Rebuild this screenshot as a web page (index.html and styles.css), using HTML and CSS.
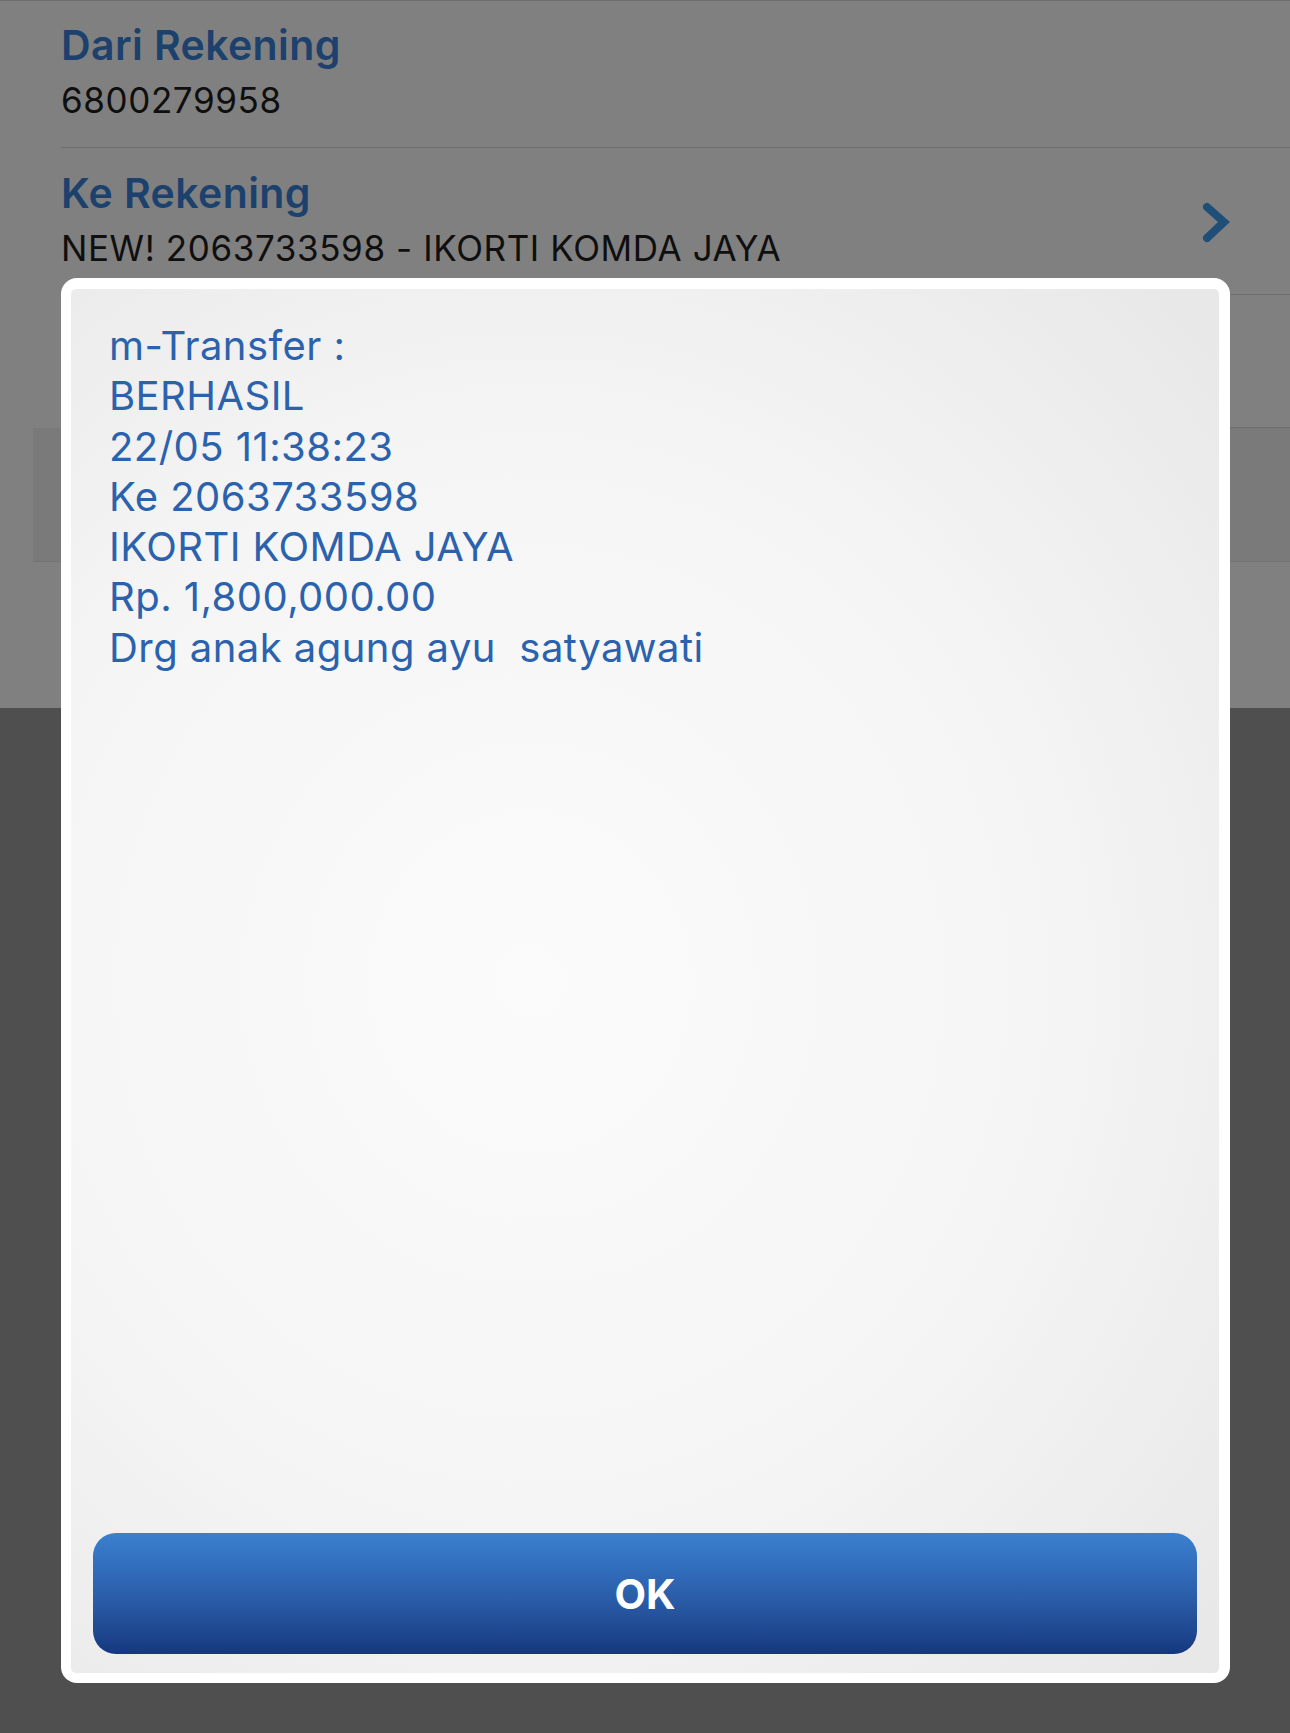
FILE: index.html
```html
<!DOCTYPE html>
<html lang="id">
<head>
<meta charset="utf-8">
<title>m-Transfer</title>
<link rel="stylesheet" href="styles.css">
</head>
<body>
<div class="page">
  <div class="row row-first">
    <div class="label">Dari Rekening</div>
    <div class="value">6800279958</div>
  </div>
  <div class="row row-link">
    <div class="row-text">
      <div class="label">Ke Rekening</div>
      <div class="value">NEW! 2063733598 - IKORTI KOMDA JAYA</div>
    </div>
    <svg class="chevron" width="30" height="42" viewBox="0 0 30 42">
      <path d="M7 5 L24 20 L7 36" fill="none" stroke="#1f4f78" stroke-width="8" stroke-linecap="round" stroke-linejoin="miter"/>
    </svg>
  </div>
  <div class="row row-empty"></div>
  <div class="row-field"></div>
  <div class="row-spacer"></div>
  <div class="page-bottom"></div>
</div>

<div class="overlay">
  <div class="modal">
    <div class="panel">
      <div class="message">
        <div>m-Transfer :</div>
        <div>BERHASIL</div>
        <div>22/05 11:38:23</div>
        <div>Ke 2063733598</div>
        <div>IKORTI KOMDA JAYA</div>
        <div>Rp. 1,800,000.00</div>
        <div>Drg anak agung ayu &nbsp;satyawati</div>
      </div>
      <button class="ok-btn">OK</button>
    </div>
  </div>
</div>
</body>
</html>
```

FILE: styles.css
```css
html, body {
  margin: 0;
  padding: 0;
}
body {
  width: 1290px;
  height: 1733px;
  position: relative;
  overflow: hidden;
  background: #4f4f4f;
  font-family: "Inter", "Liberation Sans", sans-serif;
}
.page {
  display: flex;
  flex-direction: column;
  height: 1733px;
  background: #808080;
  border-top: 1px solid #6d6d6d;
  box-sizing: border-box;
}
.row {
  margin-left: 61px;
  height: 147px;
  box-sizing: border-box;
  border-bottom: 1px solid #6e6e6e;
  padding-top: 19px;
}
.label {
  font-size: 41px;
  line-height: 50px;
  font-weight: 600;
  color: #1c416d;
  letter-spacing: 0.4px;
}
.value {
  font-size: 35px;
  line-height: 44px;
  margin-top: 8px;
  color: #0f0f0f;
  letter-spacing: 0.6px;
}
.row-link {
  display: flex;
  align-items: flex-start;
  justify-content: space-between;
  padding-top: 20px;
}
.chevron {
  margin-top: 34px;
  margin-right: 60px;
}
.row-empty {
  height: 133px;
}
.row-field {
  margin-left: 33px;
  height: 133px;
  background: #7a7a7a;
  border-bottom: 1px solid #747474;
}
.row-spacer {
  height: 146px;
}
.page-bottom {
  flex: 1;
  background: #4f4f4f;
}

.overlay {
  position: absolute;
  left: 0;
  top: 0;
  width: 1290px;
  height: 1733px;
  box-sizing: border-box;
  padding: 278px 60px 0 61px;
}
.modal {
  width: 1169px;
  height: 1405px;
  box-sizing: border-box;
  background: #ffffff;
  border-radius: 16px;
  padding: 11px 11px 10px 10px;
}
.panel {
  height: 100%;
  box-sizing: border-box;
  border-radius: 5px;
  background:
    radial-gradient(ellipse 80% 70% at 40% 50%, #fbfbfb 0%, #f5f5f5 55%, #e8e8e8 100%);
  display: flex;
  flex-direction: column;
  padding: 32px 22px 19px 22px;
}
.message {
  flex: 1;
  padding-left: 16px;
  font-size: 40px;
  line-height: 50.3px;
  letter-spacing: 0.45px;
  color: #2b62ad;
}
.ok-btn {
  height: 121px;
  width: 100%;
  border: none;
  border-radius: 23px;
  background: linear-gradient(180deg, #3b80cd 0%, #3270bf 25%, #2a5ca7 55%, #1f4991 80%, #15377f 100%);
  color: #ffffff;
  font-family: "Inter", "Liberation Sans", sans-serif;
  font-size: 41px;
  font-weight: 700;
  padding: 0;
}
```
